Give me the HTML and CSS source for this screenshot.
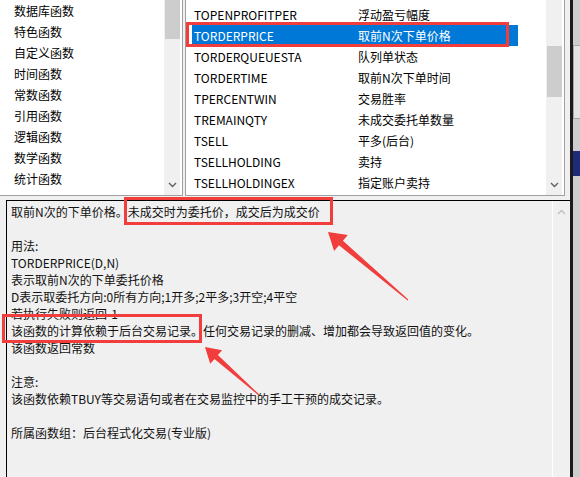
FILE: index.html
```html
<!DOCTYPE html>
<html>
<head>
    <meta charset="UTF-8">
    <title>函数说明</title>
    <link rel="stylesheet" href="styles.css">
</head>
<body>
    <div class="screen">
        <div class="app">
            <div class="top">
                <div class="cat-list">
                    <ul class="cat-items">
                        <li>数据库函数</li>
                        <li>特色函数</li>
                        <li>自定义函数</li>
                        <li>时间函数</li>
                        <li>常数函数</li>
                        <li>引用函数</li>
                        <li>逻辑函数</li>
                        <li>数学函数</li>
                        <li>统计函数</li>
                    </ul>
                    <div class="vscroll">
                        <div class="thumb cat-thumb"></div>
                        <svg class="chev" width="9" height="6" viewBox="0 0 9 6"><polyline points="1,1 4.5,4.5 8,1"/></svg>
                    </div>
                </div>

                <div class="fn-list">
                    <div class="fn-rows">
                        <div class="fn-row"><span class="fn-name">TOPENPROFITPER</span><span>浮动盈亏幅度</span></div>
                        <div class="fn-row selected"><span class="fn-name">TORDERPRICE</span><span>取前N次下单价格</span></div>
                        <div class="fn-row"><span class="fn-name">TORDERQUEUESTA</span><span>队列单状态</span></div>
                        <div class="fn-row"><span class="fn-name">TORDERTIME</span><span>取前N次下单时间</span></div>
                        <div class="fn-row"><span class="fn-name">TPERCENTWIN</span><span>交易胜率</span></div>
                        <div class="fn-row"><span class="fn-name">TREMAINQTY</span><span>未成交委托单数量</span></div>
                        <div class="fn-row"><span class="fn-name">TSELL</span><span>平多(后台)</span></div>
                        <div class="fn-row"><span class="fn-name">TSELLHOLDING</span><span>卖持</span></div>
                        <div class="fn-row"><span class="fn-name">TSELLHOLDINGEX</span><span>指定账户卖持</span></div>
                    </div>
                    <div class="vscroll">
                        <div class="thumb fn-thumb"></div>
                        <svg class="chev" width="9" height="6" viewBox="0 0 9 6"><polyline points="1,1 4.5,4.5 8,1"/></svg>
                    </div>
                </div>
            </div>

            <div class="detail">
                <div class="detail-text">取前N次的下单价格。未成交时为委托价，成交后为成交价

用法:
TORDERPRICE(D,N)
表示取前N次的下单委托价格
D表示取委托方向:0所有方向;1开多;2平多;3开空;4平空
若执行失败则返回-1
该函数的计算依赖于后台交易记录。任何交易记录的删减、增加都会导致返回值的变化。
该函数返回常数

注意:
该函数依赖TBUY等交易语句或者在交易监控中的手工干预的成交记录。

所属函数组：后台程式化交易(专业版)</div>
                <div class="detail-scroll">
                    <svg class="chev up" width="9" height="6" viewBox="0 0 9 6"><polyline points="1,5 4.5,1.5 8,5"/></svg>
                </div>
            </div>
        </div>

        <div class="edge">
            <div class="edge-line"></div>
            <div class="edge-rest">
                <div class="edge-tab"></div>
                <div class="edge-band"></div>
            </div>
        </div>

        <!-- screenshot annotations -->
        <svg class="marks" width="580" height="477" viewBox="0 0 580 477">
            <rect x="187.5" y="23.5" width="320" height="22"/>
            <rect x="125.5" y="198.5" width="206" height="25"/>
            <rect x="3.5" y="315.5" width="197" height="26"/>
            <polygon class="arrow" points="408.3,299.6 342.9,240.7 347.8,235 328,232 334.1,251 339,245.3 407.7,300.4"/>
            <polygon class="arrow" points="259.3,394.6 217.9,355.1 222.2,350.3 205,347 210.2,363.7 214.5,358.9 258.7,395.4"/>
        </svg>
    </div>
</body>
</html>
```

FILE: styles.css
```css
body {
    margin: 0;
    background: #f0f0f0;
    font-family: "Noto Sans CJK SC", "Noto Sans", sans-serif;
    font-size: 12px;
    color: #000;
}
.screen {
    position: relative;
    display: flex;
    width: 580px;
    height: 477px;
    overflow: hidden;
}
.app {
    width: 570px;
    display: flex;
    flex-direction: column;
}
.top {
    height: 200px;
    display: flex;
    align-items: flex-start;
    gap: 2px;
}
.cat-list {
    width: 182px;
    height: 195px;
    display: flex;
    background: #fff;
    border-right: 1px solid #a0a0a0;
    border-bottom: 1px solid #a0a0a0;
    overflow: hidden;
}
.cat-items {
    flex: 1;
    list-style: none;
    margin: 0;
    padding: 0 0 0 14px;
}
.cat-items li {
    height: 21px;
    line-height: 21px;
    white-space: nowrap;
}
.vscroll {
    width: 16px;
    margin-right: 2px;
    background: #f0f0f0;
    display: flex;
    flex-direction: column;
    align-items: center;
}
.thumb {
    width: 15px;
    background: #cdcdcd;
}
.cat-thumb {
    height: 39px;
}
.fn-thumb {
    height: 51px;
    margin-top: 46px;
}
.chev {
    margin-top: auto;
    margin-bottom: 7px;
}
.chev polyline {
    fill: none;
    stroke: #606060;
    stroke-width: 1.4;
}
.fn-list {
    width: 378px;
    height: 195px;
    display: flex;
    justify-content: space-between;
    background: #fff;
    border: 1px solid #a0a0a0;
    border-top: none;
    overflow: hidden;
}
.fn-rows {
    padding: 4px 0 0 6px;
}
.fn-row {
    display: flex;
    width: 324px;
    height: 21px;
    line-height: 21px;
    padding-left: 2px;
    white-space: nowrap;
}
.fn-row.selected {
    background: #0078d7;
    color: #fff;
}
.fn-name {
    width: 164px;
}
.detail {
    flex: 1;
    display: flex;
    margin-left: 6px;
    border-left: 1px solid #000;
    border-top: 1px solid #000;
    background: #f0f0f0;
}
.detail-text {
    flex: 1;
    padding: 2px 0 0 4px;
    line-height: 17px;
    white-space: pre-line;
    color: #111;
}
.detail-scroll {
    width: 17px;
    border-left: 1px solid #fff;
    display: flex;
    flex-direction: column;
    align-items: center;
}
.chev.up {
    margin: 8px 0 0 0;
}
.chev.up polyline {
    stroke: #c0c0c0;
}
.edge {
    flex: 1;
    display: flex;
}
.edge-line {
    width: 3px;
    background: #1c1c1c;
}
.edge-rest {
    flex: 1;
    background: #cdcdcd;
    display: flex;
    flex-direction: column;
    align-items: flex-end;
}
.edge-tab {
    width: 6px;
    height: 72px;
    margin-top: 45px;
    background: #e4e4e4;
    border: 1px solid #a8a8a8;
    border-right: none;
}
.edge-band {
    width: 7px;
    height: 25px;
    margin-top: 32px;
    background: #1f2a78;
}
.marks {
    position: absolute;
    left: 0;
    top: 0;
    pointer-events: none;
}
.marks rect {
    fill: none;
    stroke: #f23d3d;
    stroke-width: 3;
}
.marks .arrow {
    fill: #f23d3d;
    stroke: none;
}
```
